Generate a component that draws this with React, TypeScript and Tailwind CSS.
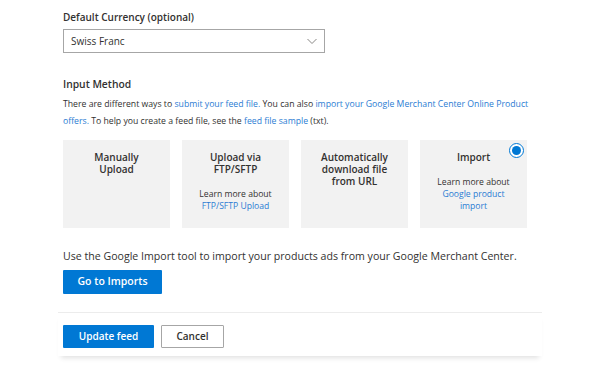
import React from "react";

const font = { fontFamily: '"Open Sans", "Noto Sans", Arial, sans-serif' };

function Card({
  title,
  learn,
  link,
  selected,
}: {
  title: string[];
  learn?: boolean;
  link?: string[];
  selected?: boolean;
}) {
  return (
    <div className="relative flex h-[88px] w-[107px] flex-col items-center bg-[#f2f2f2] pt-[11px] text-center">
      {selected && (
        <div className="absolute right-[3px] top-[3px] flex h-[15px] w-[15px] items-center justify-center rounded-full border border-[#0078d4] bg-white">
          <div className="h-[9px] w-[9px] rounded-full bg-[#0078d4]" />
        </div>
      )}
      <div className="text-[10px] font-semibold leading-[12px] text-[#323130]">
        {title.map((t) => (
          <div key={t}>{t}</div>
        ))}
      </div>
      {learn && (
        <div className="mt-[13px] text-[8.6px] leading-[12px]">
          <div className="text-[#323130]">Learn more about</div>
          {link!.map((l) => (
            <div key={l} className="text-[#2b7cd3]">
              {l}
            </div>
          ))}
        </div>
      )}
    </div>
  );
}

export default function App() {
  return (
    <div className="h-[367px] w-[600px] overflow-hidden bg-white text-[#323130]" style={font}>
      <div className="pl-[63px] pt-[9px]">
        <div className="text-[10px] font-semibold leading-[16px]">Default Currency (optional)</div>
        <div className="mt-[4px] flex h-[24px] w-[262px] items-center justify-between border border-[#a6a6a6] pl-[7px] pr-[5px] text-[10px]">
          <span>Swiss Franc</span>
          <svg width="14" height="14" viewBox="0 0 14 14" fill="none">
            <path d="M2.5 5 L7 9.5 L11.5 5" stroke="#8a8886" strokeWidth="1" />
          </svg>
        </div>

        <div className="mt-[23px] text-[10.3px] font-semibold leading-[16px]">Input Method</div>
        <div className="mt-[4px] w-[480px] text-[8.7px] leading-[17px]">
          <div>
            There are different ways to <span className="text-[#2b7cd3]">submit your feed file.</span> You can also{" "}
            <span className="text-[#2b7cd3]">import your Google Merchant Center Online Product</span>
          </div>
          <div>
            <span className="text-[#2b7cd3]">offers.</span> To help you create a feed file, see the{" "}
            <span className="text-[#2b7cd3]">feed file sample</span> (txt).
          </div>
        </div>

        <div className="mt-[10px] flex gap-[12px]">
          <Card title={["Manually", "Upload"]} />
          <Card title={["Upload via", "FTP/SFTP"]} learn link={["FTP/SFTP Upload"]} />
          <Card title={["Automatically", "download file", "from URL"]} />
          <Card title={["Import"]} learn link={["Google product", "import"]} selected />
        </div>

        <div className="mt-[20px] text-[10.6px] leading-[16px]">
          Use the Google Import tool to import your products ads from your Google Merchant Center.
        </div>
        <button className="mt-[6px] flex h-[24px] w-[99px] items-center justify-center rounded-[1px] bg-[#0078d4] text-[10.5px] font-semibold text-white">
          Go to Imports
        </button>
      </div>

      <div className="ml-[58px] mt-[18px] w-[484px] border-t border-[#ececec] pb-[8px] pl-[5px] pt-[12px] shadow-[0_5px_5px_-3px_rgba(0,0,0,0.12)]">
        <div className="flex gap-[7px]">
          <button className="flex h-[23px] w-[91px] items-center justify-center rounded-[1px] bg-[#0078d4] text-[10px] font-semibold text-white">
            Update feed
          </button>
          <button className="flex h-[23px] w-[63px] items-center justify-center rounded-[1px] border border-[#a6a6a6] bg-white text-[10px] font-semibold text-[#323130]">
            Cancel
          </button>
        </div>
      </div>
    </div>
  );
}
